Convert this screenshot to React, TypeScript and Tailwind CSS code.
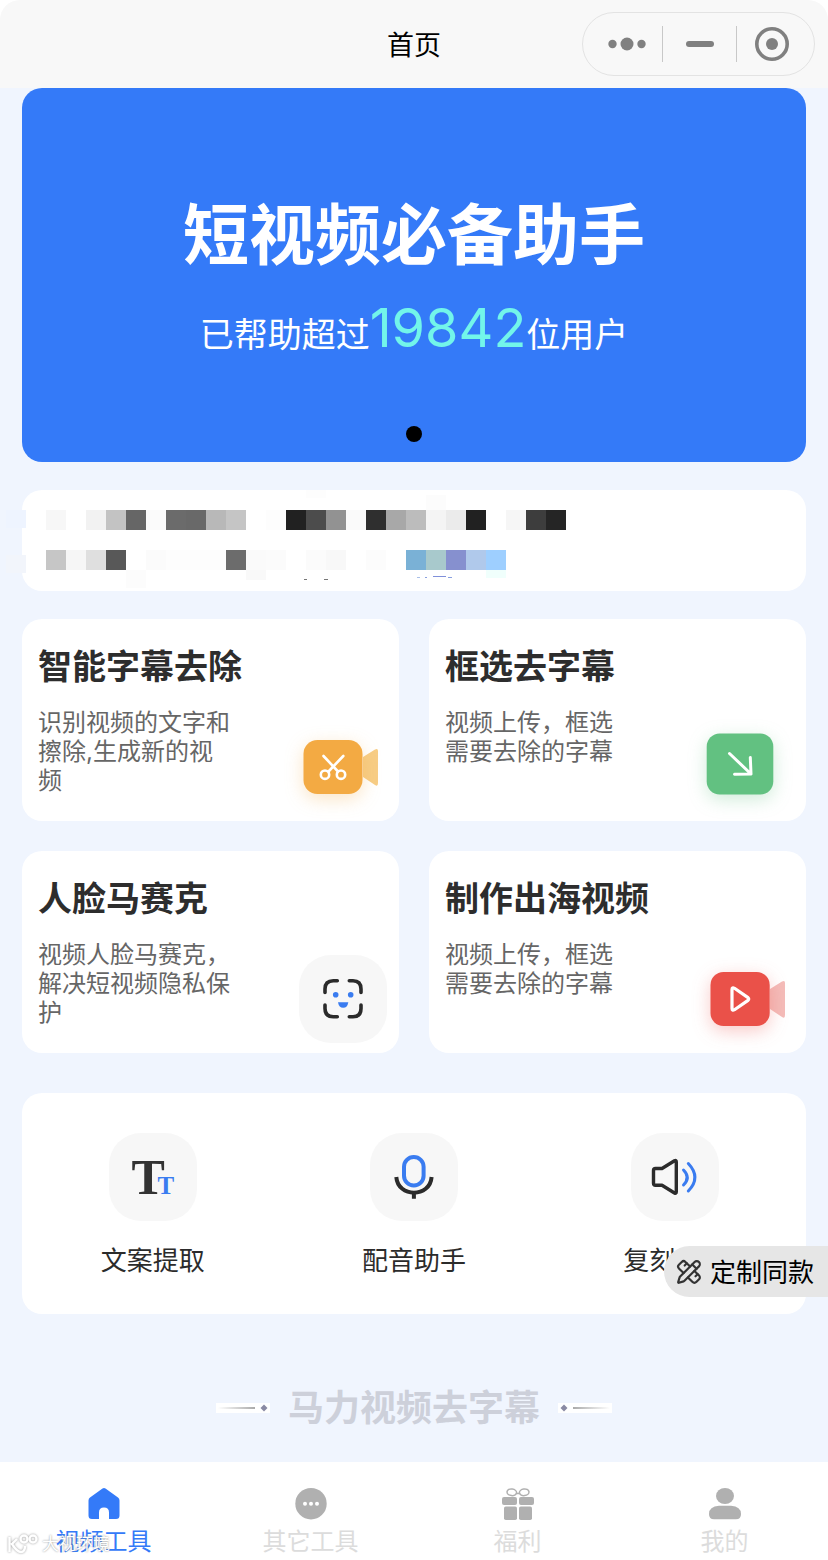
import React, { useState } from 'react';
import { PencilRuler } from 'lucide-react';

// Censored notice: [x, y, width, height, colour]
const mosaic: [number, number, number, number, string][] = [
  [-16, 20, 20, 18, '#eef4ff'],
  [-16, 65, 20, 18, '#f2f5fb'],
  [24, 20, 20, 20, '#f7f7f7'],
  [64, 20, 20, 20, '#f2f2f2'],
  [84, 20, 20, 20, '#c3c3c3'],
  [104, 20, 20, 20, '#666666'],
  [124, 20, 20, 20, '#fbfbfb'],
  [144, 20, 20, 20, '#6b6b6b'],
  [164, 20, 20, 20, '#696969'],
  [184, 20, 20, 20, '#b8b8b8'],
  [204, 20, 20, 20, '#c5c5c5'],
  [244, 20, 20, 20, '#fdfdfd'],
  [264, 20, 20, 20, '#212121'],
  [284, 20, 20, 20, '#4c4c4c'],
  [304, 20, 20, 20, '#929292'],
  [324, 20, 20, 20, '#fafafa'],
  [344, 20, 20, 20, '#2f2f2f'],
  [364, 20, 20, 20, '#a8a8a8'],
  [384, 20, 20, 20, '#bcbcbc'],
  [404, 20, 20, 20, '#f4f4f4'],
  [424, 20, 20, 20, '#ebebeb'],
  [444, 20, 20, 20, '#212121'],
  [484, 20, 20, 20, '#f6f6f6'],
  [504, 20, 20, 20, '#3d3d3d'],
  [524, 20, 20, 20, '#252525'],
  [284, 0, 20, 8, '#fdfdfd'],
  [404, 5, 20, 15, '#fcfcfc'],
  [24, 60, 20, 20, '#c6c6c6'],
  [44, 60, 20, 20, '#f6f6f6'],
  [64, 60, 20, 20, '#dfdfdf'],
  [84, 60, 20, 20, '#585858'],
  [124, 60, 20, 20, '#fbfbfb'],
  [144, 60, 60, 20, '#fdfdfd'],
  [204, 60, 20, 20, '#6c6c6c'],
  [224, 60, 20, 20, '#fafafa'],
  [244, 60, 20, 20, '#fbfbfb'],
  [284, 60, 20, 20, '#fbfbfb'],
  [304, 60, 20, 20, '#f8f8f8'],
  [344, 60, 20, 20, '#fcfcfc'],
  [384, 60, 20, 20, '#7ab1d6'],
  [404, 60, 20, 20, '#a8c9cc'],
  [424, 60, 20, 20, '#8690cf'],
  [444, 60, 20, 20, '#b0c9eb'],
  [464, 60, 20, 20, '#9ecfff'],
  [104, 80, 20, 18, '#fcfcfc'],
  [224, 80, 20, 10, '#f9f9f9'],
  [464, 80, 20, 8, '#f0fffc'],
  [282, 89, 3, 1, '#777777'],
  [302, 89, 4, 1, '#777777'],
  [395, 87, 3, 1, '#a9bfe8'],
  [403, 87, 2, 1, '#8aa0df'],
  [411, 86, 13, 1, '#8090da'],
  [426, 87, 4, 1, '#8aa0df'],
];

function SubtitleIcon() {
  return (
    <svg viewBox="0 0 88 88" className="size-[88px] overflow-visible" aria-hidden="true">
      <path d="M64 34L76 26.500Q79 25 79 28V60Q79 64 76 62L64 54Z" fill="#f7cd85" />
      <rect x="4.500" y="17" width="59" height="54" rx="14" fill="#f3aa43" className="drop-shadow-[0_5px_9px_rgba(243,170,67,0.3)]" />
      <g fill="none" stroke="#fff" strokeWidth="2.600" strokeLinecap="round">
        <path d="M24.500 33L39 48.500M44.300 33L29.500 48.500" />
        <circle cx="26" cy="51.700" r="4.200" />
        <circle cx="42" cy="51.700" r="4.200" />
      </g>
    </svg>
  );
}

function SelectIcon() {
  return (
    <svg viewBox="0 0 88 88" className="size-[88px] overflow-visible" aria-hidden="true">
      <rect x=".7" y="10.500" width="66.600" height="61" rx="13" fill="#62c181" className="drop-shadow-[0_5px_9px_rgba(98,193,129,0.3)]" />
      <path d="M23.500 30.500L45 51M44.300 34.500L45 51L28.500 51.300" fill="none" stroke="#fff" strokeWidth="3" strokeLinecap="round" strokeLinejoin="round" />
    </svg>
  );
}

function FaceIcon() {
  return (
    <svg viewBox="0 0 88 88" className="size-[88px]" aria-hidden="true">
      <rect width="88" height="88" rx="32" fill="#f7f7f7" />
      <path
        d="M26 37.500V34Q26 25.700 34.300 25.700H38.300M50.300 25.700H54Q62 25.700 62 34V37.500M62 50V53.500Q62 61.700 54 61.700H50.300M38.300 61.700H34.300Q26 61.700 26 53.500V50"
        fill="none"
        stroke="#2b2b2b"
        strokeWidth="3.600"
        strokeLinecap="round"
      />
      <circle cx="36.700" cy="39.800" r="2.800" fill="#3a7cf0" />
      <circle cx="51.700" cy="39.800" r="2.800" fill="#3a7cf0" />
      <path d="M39 47.200H49.300Q48.500 52.700 44.200 52.700T39 47.200Z" fill="#3a7cf0" />
    </svg>
  );
}

function VideoIcon() {
  return (
    <svg viewBox="0 0 88 88" className="size-[88px] overflow-visible" aria-hidden="true">
      <path d="M64 34L76 26.500Q79 25 79 28V60Q79 64 76 62L64 54Z" fill="#f4bcb9" />
      <rect x="4.500" y="17" width="59.200" height="54" rx="13" fill="#ea5149" className="drop-shadow-[0_5px_9px_rgba(234,81,73,0.3)]" />
      <path d="M26 34.500Q26 32 28.500 33.300L42 42.600Q43.500 44 42 45.400L28.500 54.700Q26 56 26 53.500Z" fill="none" stroke="#fff" strokeWidth="3.200" strokeLinejoin="round" />
    </svg>
  );
}

function TextIcon() {
  return (
    <svg viewBox="0 0 88 88" className="size-[88px]" aria-hidden="true">
      <g className="font-['Liberation_Serif',serif] font-bold">
        <text x="22.500" y="61" fontSize="50" fill="#333">T</text>
        <text x="48.600" y="61" fontSize="25" fill="#3a7cf0">T</text>
      </g>
    </svg>
  );
}

function MicIcon() {
  return (
    <svg viewBox="0 0 88 88" className="size-[88px]" fill="none" strokeWidth="4" aria-hidden="true">
      <rect x="34" y="24" width="19.600" height="28.500" rx="9.800" stroke="#3a7cf0" />
      <path d="M26.300 44C28 65 60 65 61.600 44M43.900 59.500V65.800" stroke="#2b2b2b" />
    </svg>
  );
}

function SpeakerIcon() {
  return (
    <svg viewBox="0 0 88 88" className="size-[88px]" fill="none" strokeWidth="3.400" strokeLinecap="round" strokeLinejoin="round" aria-hidden="true">
      <path d="M24.500 35.500H31L43.500 27.800Q45.300 27 45.300 29V58.800Q45.300 61 43.500 60L31 52.300H24.500Q22.500 52.300 22.500 50.300V37.500Q22.500 35.500 24.500 35.500Z" stroke="#2b2b2b" />
      <path d="M52.500 37Q60 44.500 52.500 52M57.300 30.500Q70.500 44.500 57.300 58" stroke="#3a7cf0" strokeWidth="3" />
    </svg>
  );
}

function HomeIcon() {
  return (
    <svg viewBox="0 0 32 32" className="size-8" fill="currentColor" aria-hidden="true">
      <path d="M14.500.6Q16 -.4 17.500.6L30 9.500Q31.500 10.600 31.500 12.500V27.500Q31.500 31 28 31H21V24.500Q21 19.500 16 19.500T11 24.500V31H4Q.5 31 .5 27.500V12.500Q.5 10.600 2 9.500Z" />
    </svg>
  );
}

function MoreIcon() {
  return (
    <svg viewBox="0 0 32 32" className="size-8" aria-hidden="true">
      <circle cx="16" cy="15.700" r="15.700" fill="#b0b0b0" />
      <g fill="#fff">
        <circle cx="10" cy="15.700" r="2" />
        <circle cx="16" cy="15.700" r="2" />
        <circle cx="22" cy="15.700" r="2" />
      </g>
    </svg>
  );
}

function GiftIcon() {
  return (
    <svg viewBox="0 0 32 32" className="size-8" fill="#b0b0b0" aria-hidden="true">
      <g fill="none" stroke="#b0b0b0" strokeWidth="1.500">
        <ellipse cx="9.800" cy="4.300" rx="4.800" ry="3.300" transform="rotate(8 9.800 4.300)" />
        <ellipse cx="22.200" cy="4.300" rx="4.800" ry="3.300" transform="rotate(-8 22.200 4.300)" />
        <path d="M14.500 5.500H17.500" />
      </g>
      <rect y="9" width="15" height="8" rx="2" />
      <rect x="17" y="9" width="15" height="8" rx="2" />
      <rect x="2" y="18.500" width="13" height="13.500" rx="1.800" />
      <rect x="17" y="18.500" width="13" height="13.500" rx="1.800" />
    </svg>
  );
}

function UserIcon() {
  return (
    <svg viewBox="0 0 32 32" className="size-8" fill="#b0b0b0" aria-hidden="true">
      <ellipse cx="16" cy="8" rx="9" ry="8" />
      <path d="M10 17.800H22Q32 18.500 32 26Q32 31.300 27 31.300H5Q0 31.300 0 26Q0 18.500 10 17.800Z" />
    </svg>
  );
}

const features = [
  { title: '智能字幕去除', lines: ['识别视频的文字和', '擦除,生成新的视', '频'], icon: SubtitleIcon },
  { title: '框选去字幕', lines: ['视频上传，框选', '需要去除的字幕'], icon: SelectIcon },
  { title: '人脸马赛克', lines: ['视频人脸马赛克，', '解决短视频隐私保', '护'], icon: FaceIcon },
  { title: '制作出海视频', lines: ['视频上传，框选', '需要去除的字幕'], icon: VideoIcon },
];

const tools = [
  { label: '文案提取', icon: TextIcon },
  { label: '配音助手', icon: MicIcon },
  { label: '复刻声音', icon: SpeakerIcon },
];

const tabs = [
  { label: '视频工具', icon: HomeIcon },
  { label: '其它工具', icon: MoreIcon },
  { label: '福利', icon: GiftIcon },
  { label: '我的', icon: UserIcon },
];

function Header() {
  return (
    <header className="grid h-[88px] grid-cols-[1fr_auto_1fr] items-center rounded-t-[20px] bg-[#f8f8f8] px-[13px]">
      <h1 className="col-start-2 pt-[3px] text-[27px] leading-10 text-black">首页</h1>
      <div className="flex h-16 w-[233px] items-center justify-self-end rounded-full border border-[#e3e3e3]">
        <button aria-label="更多" className="flex w-[79px] justify-center pl-2">
          <svg viewBox="0 0 38 14" className="h-[14px] w-[38px]" fill="#808080">
            <circle cx="4.500" cy="7" r="4.200" />
            <circle cx="19" cy="7" r="6.500" />
            <circle cx="33.500" cy="7" r="4.200" />
          </svg>
        </button>
        <span className="h-9 w-px bg-[#c8c8c8]" />
        <button aria-label="最小化" className="flex w-[73px] justify-center">
          <span className="h-[6px] w-7 rounded-full bg-[#808080]" />
        </button>
        <span className="h-9 w-px bg-[#c8c8c8]" />
        <button aria-label="关闭" className="flex flex-1 justify-center pr-2">
          <svg viewBox="0 0 34 34" className="size-[34px]">
            <circle cx="17" cy="17" r="15.200" fill="none" stroke="#808080" strokeWidth="3.600" />
            <circle cx="17" cy="17" r="6" fill="#808080" />
          </svg>
        </button>
      </div>
    </header>
  );
}

function Divider({ flip = false }: { flip?: boolean }) {
  return (
    <svg viewBox="0 0 54 10" className={flip ? 'h-[10px] w-[54px] rotate-180' : 'h-[10px] w-[54px]'} aria-hidden="true">
      <defs>
        <linearGradient id="fade">
          <stop offset="0" stopColor="#fff" />
          <stop offset="1" stopColor="#aaa" />
        </linearGradient>
      </defs>
      <rect width="54" height="10" fill="#fff" />
      <rect x="2" y="4" width="37" height="2" fill="url(#fade)" />
      <path d="M48 1.500L51.500 5L48 8.500L44.500 5Z" fill="#8a8aa3" />
    </svg>
  );
}

export default function App() {
  const [activeTab, setActiveTab] = useState('视频工具');

  return (
    <div className="flex min-h-screen flex-col bg-white font-[Inter,'Noto_Sans_CJK_SC',sans-serif]">
      <Header />

      <main className="flex flex-1 flex-col bg-[#f0f5fe] px-[22px]">
        {/* Banner */}
        <section className="relative flex h-[374px] flex-col items-center rounded-[20px] bg-[#347af8] pt-[107px] text-white">
          <h2 className="text-[66px] leading-[80px] font-bold">短视频必备助手</h2>
          <p className="mt-[21px] text-[34px] leading-[64px]">
            已帮助超过<span className="text-[54px] text-[#72f5ea]">19842</span>位用户
          </p>
          <span className="absolute bottom-5 left-1/2 size-4 -translate-x-1/2 rounded-full bg-black" />
        </section>

        {/* Notice */}
        <section className="mt-7 h-[101px] rounded-[20px] bg-white">
          <svg viewBox="0 0 560 101" className="h-[101px] w-[560px] overflow-visible" aria-hidden="true">
            {mosaic.map(([x, y, width, height, fill]) => (
              <rect key={`${x}-${y}`} x={x} y={y} width={width} height={height} fill={fill} />
            ))}
          </svg>
        </section>

        {/* Feature cards */}
        <section className="mt-7 grid grid-cols-2 gap-[30px]">
          {features.map((feature) => (
            <a key={feature.title} href="#" className="flex h-[202px] justify-between rounded-[20px] bg-white pt-6 pr-3 pb-[10px] pl-4">
              <div>
                <h3 className="text-[34px] leading-[48px] font-bold whitespace-nowrap text-[#2d2d2d]">{feature.title}</h3>
                <p className="mt-[17px] text-2xl leading-[29px] whitespace-nowrap text-[#666]">
                  {feature.lines.map((line) => (
                    <span key={line} className="block">{line}</span>
                  ))}
                </p>
              </div>
              <div className="-ml-20 self-end">
                <feature.icon />
              </div>
            </a>
          ))}
        </section>

        {/* Tools */}
        <section className="relative mt-10 grid h-[221px] grid-cols-3 rounded-[20px] bg-white pt-10">
          {tools.map((tool) => (
            <a key={tool.label} href="#" className="flex flex-col items-center">
              <span className="rounded-[32px] bg-[#f7f7f7]">
                <tool.icon />
              </span>
              <span className="mt-[22px] text-[26px] leading-9 text-[#2b2b2b]">{tool.label}</span>
            </a>
          ))}
          <button className="absolute top-[153px] -right-[22px] flex h-[51px] w-[164px] items-center gap-2 rounded-l-full bg-[#e6e6e6] pt-px pl-3 text-[26px] whitespace-nowrap text-black">
            <PencilRuler className="size-[26px] shrink-0 text-[#333]" strokeWidth={2} />
            定制同款
          </button>
        </section>

        <footer className="flex flex-1 items-center justify-center gap-[18px] pt-10">
          <Divider />
          <p className="text-4xl leading-[52px] font-bold text-[#cdd0da]">马力视频去字幕</p>
          <Divider flip />
        </footer>
      </main>

      {/* Tab bar */}
      <nav className="relative grid h-[98px] grid-cols-4 bg-white pt-[26px]">
        {tabs.map((tab) => (
          <button
            key={tab.label}
            onClick={() => setActiveTab(tab.label)}
            className={`flex flex-col items-center ${activeTab === tab.label ? 'text-[#347af8]' : 'text-[#dcdcdc]'}`}
          >
            <tab.icon />
            <span className="mt-1 text-2xl leading-9">{tab.label}</span>
          </button>
        ))}
        <div className="pointer-events-none absolute bottom-[6px] left-2 flex items-center gap-1 text-white">
          <svg viewBox="0 0 30 20" className="h-5 w-[30px] drop-shadow-[0_0_1px_#999]" fill="none" stroke="#fff" strokeWidth="2.400" aria-hidden="true">
            <path d="M1.500 3V18M9 5L4 10Q9 18 13 18Q17 18 17 12" />
            <circle cx="16" cy="5" r="3.500" />
            <circle cx="25" cy="5" r="3.500" />
          </svg>
          <span className="text-[17px] leading-5 [text-shadow:0_0_2px_#888]">大视环境</span>
        </div>
      </nav>
    </div>
  );
}
